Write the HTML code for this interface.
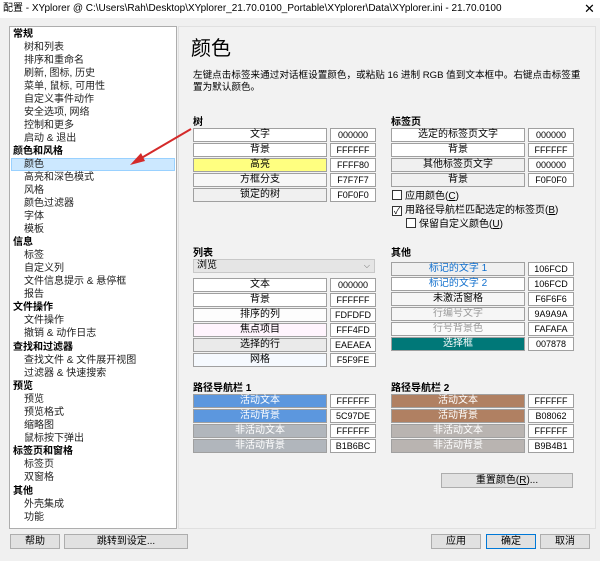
<!DOCTYPE html><html><head><meta charset="utf-8"><style>
*{margin:0;padding:0;box-sizing:border-box}
body{width:600px;height:561px;background:#f0f0f0;font-family:"Liberation Sans","Noto Sans CJK SC",sans-serif;font-size:10px;color:#000;position:relative;overflow:hidden}
.a{position:absolute;white-space:nowrap}
.title{left:0;top:0;width:600px;height:18px;background:#fff;font-size:10px;line-height:18px;padding-left:3px}
.left{left:9px;top:26px;width:168px;height:503px;background:#fff;border:1px solid #adadad}
.right{left:178px;top:26px;width:418px;height:503px;background:#f2f2f2;border:1px solid #e0e0e0}
.it{position:absolute;left:3px;height:13px;line-height:14px;font-size:10px;color:#222}
.it.h{font-weight:bold;color:#000}
.it.s{left:14px}
.sel{position:absolute;left:1px;width:164px;height:13px;background:#cce8ff;border:1px solid #99d1ff}
.lb{position:absolute;height:14px;border:1px solid #a0a0a0;text-align:center;line-height:12px;font-size:10px}
.v{position:absolute;height:14px;width:46px;border:1px solid #a0a0a0;background:#fff;text-align:center;line-height:13px;font-size:9px}
.sec{position:absolute;font-weight:bold;font-size:10px}
.btn{position:absolute;height:15px;background:#e1e1e1;border:1px solid #adadad;text-align:center;line-height:13px;font-size:10px}
.cb{position:absolute;font-size:10px;line-height:12px}
.cb i{display:inline-block;width:10px;height:10px;border:1px solid #333;background:#fff;vertical-align:-1px;margin-right:3px;font-style:normal;font-size:9px;line-height:8px;text-align:center}
</style></head><body>
<div class="a title">配置 - XYplorer @ C:\Users\Rah\Desktop\XYplorer_21.70.0100_Portable\XYplorer\Data\XYplorer.ini - 21.70.0100<span style="position:absolute;left:584px;font-size:13px">✕</span></div>
<div class="a left">
<div class="sel" style="top:131px"></div>
<div class="it h" style="top:1px">常规</div>
<div class="it s" style="top:14px">树和列表</div>
<div class="it s" style="top:27px">排序和重命名</div>
<div class="it s" style="top:40px">刷新, 图标, 历史</div>
<div class="it s" style="top:53px">菜单, 鼠标, 可用性</div>
<div class="it s" style="top:66px">自定义事件动作</div>
<div class="it s" style="top:79px">安全选项, 网络</div>
<div class="it s" style="top:92px">控制和更多</div>
<div class="it s" style="top:105px">启动 &amp; 退出</div>
<div class="it h" style="top:118px">颜色和风格</div>
<div class="it s" style="top:131px">颜色</div>
<div class="it s" style="top:144px">高亮和深色模式</div>
<div class="it s" style="top:157px">风格</div>
<div class="it s" style="top:170px">颜色过滤器</div>
<div class="it s" style="top:183px">字体</div>
<div class="it s" style="top:196px">模板</div>
<div class="it h" style="top:209px">信息</div>
<div class="it s" style="top:222px">标签</div>
<div class="it s" style="top:235px">自定义列</div>
<div class="it s" style="top:248px">文件信息提示 &amp; 悬停框</div>
<div class="it s" style="top:261px">报告</div>
<div class="it h" style="top:274px">文件操作</div>
<div class="it s" style="top:287px">文件操作</div>
<div class="it s" style="top:300px">撤销 &amp; 动作日志</div>
<div class="it h" style="top:314px">查找和过滤器</div>
<div class="it s" style="top:327px">查找文件 &amp; 文件展开视图</div>
<div class="it s" style="top:340px">过滤器 &amp; 快速搜索</div>
<div class="it h" style="top:353px">预览</div>
<div class="it s" style="top:366px">预览</div>
<div class="it s" style="top:379px">预览格式</div>
<div class="it s" style="top:392px">缩略图</div>
<div class="it s" style="top:405px">鼠标按下弹出</div>
<div class="it h" style="top:418px">标签页和窗格</div>
<div class="it s" style="top:431px">标签页</div>
<div class="it s" style="top:444px">双窗格</div>
<div class="it h" style="top:458px">其他</div>
<div class="it s" style="top:471px">外壳集成</div>
<div class="it s" style="top:484px">功能</div>
</div>
<div class="a right"></div>
<div class="a" style="left:191px;top:36px;font-size:20px;line-height:26px">颜色</div>
<div class="a" style="left:193px;top:70px;font-size:9.6px;line-height:12px;white-space:normal;width:390px">左键点击标签来通过对话框设置颜色，或粘贴 16 进制 RGB 值到文本框中。右键点击标签重置为默认颜色。</div>

<div class="sec" style="left:193px;top:113px">树</div>
<div class="lb" style="left:193px;top:128px;width:134px;background:#fff">文字</div><div class="v" style="left:330px;top:128px">000000</div>
<div class="lb" style="left:193px;top:143px;width:134px;background:#fff">背景</div><div class="v" style="left:330px;top:143px">FFFFFF</div>
<div class="lb" style="left:193px;top:158px;width:134px;background:#ffff80">高亮</div><div class="v" style="left:330px;top:158px">FFFF80</div>
<div class="lb" style="left:193px;top:173px;width:134px;background:#f7f7f7">方框分支</div><div class="v" style="left:330px;top:173px">F7F7F7</div>
<div class="lb" style="left:193px;top:188px;width:134px;background:#f0f0f0">锁定的树</div><div class="v" style="left:330px;top:188px">F0F0F0</div>

<div class="sec" style="left:391px;top:113px">标签页</div>
<div class="lb" style="left:391px;top:128px;width:134px;background:#fff">选定的标签页文字</div><div class="v" style="left:528px;top:128px">000000</div>
<div class="lb" style="left:391px;top:143px;width:134px;background:#fff">背景</div><div class="v" style="left:528px;top:143px">FFFFFF</div>
<div class="lb" style="left:391px;top:158px;width:134px;background:#f0f0f0">其他标签页文字</div><div class="v" style="left:528px;top:158px">000000</div>
<div class="lb" style="left:391px;top:173px;width:134px;background:#f0f0f0">背景</div><div class="v" style="left:528px;top:173px">F0F0F0</div>
<div class="cb" style="left:392px;top:190px"><i></i>应用颜色(<u>C</u>)</div>
<div class="cb" style="left:392px;top:205px"><i>✓</i>用路径导航栏匹配选定的标签页(<u>B</u>)</div>
<div class="cb" style="left:406px;top:218px"><i></i>保留自定义颜色(<u>U</u>)</div>

<div class="sec" style="left:193px;top:244px">列表</div>
<div class="a" style="left:193px;top:259px;width:182px;height:14px;background:#e5e5e5;border:1px solid #c8c8c8;font-size:10px;line-height:12px;padding-left:3px">浏览<span style="position:absolute;right:4px;font-size:8px;color:#666">⌵</span></div>
<div class="lb" style="left:193px;top:278px;width:134px;background:#fff">文本</div><div class="v" style="left:330px;top:278px">000000</div>
<div class="lb" style="left:193px;top:293px;width:134px;background:#fff">背景</div><div class="v" style="left:330px;top:293px">FFFFFF</div>
<div class="lb" style="left:193px;top:308px;width:134px;background:#fdfdfd">排序的列</div><div class="v" style="left:330px;top:308px">FDFDFD</div>
<div class="lb" style="left:193px;top:323px;width:134px;background:#fff4fd">焦点项目</div><div class="v" style="left:330px;top:323px">FFF4FD</div>
<div class="lb" style="left:193px;top:338px;width:134px;background:#eaeaea">选择的行</div><div class="v" style="left:330px;top:338px">EAEAEA</div>
<div class="lb" style="left:193px;top:353px;width:134px;background:#f5f9fe">网格</div><div class="v" style="left:330px;top:353px">F5F9FE</div>

<div class="sec" style="left:391px;top:244px">其他</div>
<div class="lb" style="left:391px;top:262px;width:134px;background:#f0f0f0;color:#106fcd">标记的文字 1</div><div class="v" style="left:528px;top:262px">106FCD</div>
<div class="lb" style="left:391px;top:277px;width:134px;background:#fff;color:#106fcd">标记的文字 2</div><div class="v" style="left:528px;top:277px">106FCD</div>
<div class="lb" style="left:391px;top:292px;width:134px;background:#f6f6f6">未激活窗格</div><div class="v" style="left:528px;top:292px">F6F6F6</div>
<div class="lb" style="left:391px;top:307px;width:134px;background:#f6f6f6;color:#9a9a9a">行编号文字</div><div class="v" style="left:528px;top:307px">9A9A9A</div>
<div class="lb" style="left:391px;top:322px;width:134px;background:#fafafa;color:#9a9a9a">行号背景色</div><div class="v" style="left:528px;top:322px">FAFAFA</div>
<div class="lb" style="left:391px;top:337px;width:134px;background:#007878;color:#fff">选择框</div><div class="v" style="left:528px;top:337px">007878</div>

<div class="sec" style="left:193px;top:379px">路径导航栏 1</div>
<div class="lb" style="left:193px;top:394px;width:134px;background:#5c97de;color:#fff">活动文本</div><div class="v" style="left:330px;top:394px">FFFFFF</div>
<div class="lb" style="left:193px;top:409px;width:134px;background:#5c97de;color:#fff">活动背景</div><div class="v" style="left:330px;top:409px">5C97DE</div>
<div class="lb" style="left:193px;top:424px;width:134px;background:#b1b6bc;color:#fff">非活动文本</div><div class="v" style="left:330px;top:424px">FFFFFF</div>
<div class="lb" style="left:193px;top:439px;width:134px;background:#b1b6bc;color:#fff">非活动背景</div><div class="v" style="left:330px;top:439px">B1B6BC</div>

<div class="sec" style="left:391px;top:379px">路径导航栏 2</div>
<div class="lb" style="left:391px;top:394px;width:134px;background:#b08062;color:#fff">活动文本</div><div class="v" style="left:528px;top:394px">FFFFFF</div>
<div class="lb" style="left:391px;top:409px;width:134px;background:#b08062;color:#fff">活动背景</div><div class="v" style="left:528px;top:409px">B08062</div>
<div class="lb" style="left:391px;top:424px;width:134px;background:#b9b4b1;color:#fff">非活动文本</div><div class="v" style="left:528px;top:424px">FFFFFF</div>
<div class="lb" style="left:391px;top:439px;width:134px;background:#b9b4b1;color:#fff">非活动背景</div><div class="v" style="left:528px;top:439px">B9B4B1</div>

<div class="btn" style="left:441px;top:473px;width:132px">重置颜色(<u>R</u>)...</div>

<div class="btn" style="left:10px;top:534px;width:50px">帮助</div>
<div class="btn" style="left:64px;top:534px;width:124px">跳转到设定...</div>
<div class="btn" style="left:431px;top:534px;width:50px">应用</div>
<div class="btn" style="left:486px;top:534px;width:50px;border:1px solid #0078d7">确定</div>
<div class="btn" style="left:540px;top:534px;width:50px">取消</div>

<svg class="a" style="left:0;top:0" width="600" height="561"><line x1="191" y1="129" x2="138" y2="160" stroke="#d42a2a" stroke-width="2"/><polygon points="130,165 141,153 145,161" fill="#d42a2a"/></svg>
</body></html>
